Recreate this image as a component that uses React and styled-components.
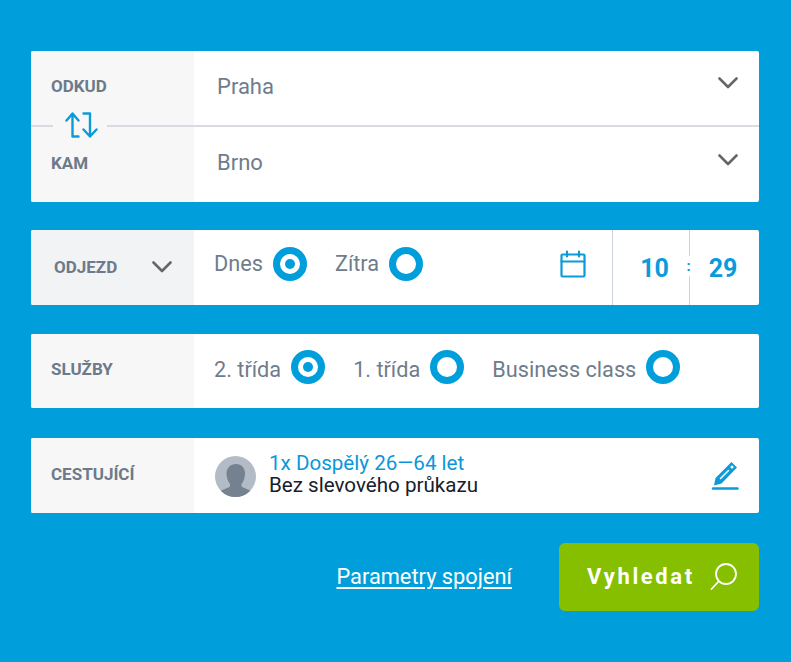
import React from 'react';
import styled, { createGlobalStyle } from 'styled-components';

const Global = createGlobalStyle`
  html, body { margin: 0; padding: 0; background: #009fdc; }
  body { font-family: Roboto, "Liberation Sans", sans-serif; }
`;
const Page = styled.div`
  width: 791px; height: 662px; box-sizing: border-box; padding: 51px 32px 0 31px;
  background: #009fdc; display: flex; flex-direction: column; overflow: hidden;
`;
const Card = styled.section`
  display: grid; grid-template-columns: 163px 1fr; background: #fff; border-radius: 2px; flex: none;
  height: ${p => p.$h}px; margin-top: ${p => p.$mt || 0}px; overflow: hidden; position: relative;
`;
const Label = styled.div`
  background: ${p => p.$bg || '#f7f7f7'}; color: #6c7a8a; font-size: 17px; font-weight: 700;
  display: flex; align-items: center; justify-content: space-between;
  padding: 0 ${p => p.$pr || 0}px ${p => p.$pb || 0}px ${p => p.$pl || 20}px; box-sizing: border-box;
`;
const RouteRows = styled.div` grid-column: 1 / 3; display: flex; flex-direction: column; `;
const RouteRow = styled.div`
  display: grid; grid-template-columns: 163px 1fr; height: 74px; flex: none;
  & + & { height: 77px; border-top: 2px solid #d8dce2; box-sizing: border-box; }
`;
const RouteValue = styled.div`
  display: flex; align-items: center; justify-content: space-between; padding: 0 21px 4px 23px;
  font-size: 22px; color: #6f7c8b;
`;
const ChevronUp = styled.span` margin-top: -6px; display: flex; `;
const Swap = styled.div`
  position: absolute; left: 22px; top: 56px; width: 54px; height: 36px; box-sizing: border-box;
  display: flex; align-items: center; padding-left: 12px; background: #f7f7f7;
`;
const Body = styled.div`
  display: flex; align-items: center; padding: 0 0 ${p => p.$pb || 0}px 20px; min-width: 0;
`;
const Choice = styled.div`
  display: flex; align-items: center; gap: 10px; font-size: 21.7px; color: #6f7c8b;
  margin-right: ${p => p.$mr}px;
`;
const Word = styled.span` padding-top: ${p => p.$pt || 0}px; `;
const Radio = styled.span`
  width: 34px; height: 34px; box-sizing: border-box; border: 7px solid #009fdc; border-radius: 50%;
  display: flex; align-items: center; justify-content: center; background: #fff;
  &::after { content: ''; width: 10px; height: 10px; border-radius: 50%; background: ${p => p.$on ? '#009fdc' : 'transparent'}; }
`;
const DateChoices = styled.div` display: flex; align-items: center; padding-bottom: 8px; `;
const CalendarSlot = styled.div`
  margin-left: auto; width: 52px; height: 100%; display: flex; align-items: center; padding-bottom: 7px; box-sizing: border-box;
`;
const Time = styled.div`
  height: 100%; width: ${p => p.$w}px; border-left: 1.5px solid #ccd2db; box-sizing: border-box;
  display: flex; align-items: center; justify-content: center; color: #0a9bd9; font-size: 25px;
  font-weight: 700; position: relative;
  padding: 2px ${p => p.$pr || 0}px 0 ${p => p.$pl || 0}px;
`;
const Colon = styled.span`
  position: absolute; left: -5px; top: 26px; font-size: 15px; background: #fff; line-height: 20px; width: 7px; text-align: center;
`;
const Avatar = styled.div`
  width: 41px; height: 41px; border-radius: 50%; overflow: hidden; flex: none; background: #b3bcc6; margin: 2px 13px 0 1px;
`;
const Lines = styled.div` display: flex; flex-direction: column; font-size: 20.6px; line-height: 22px; margin-top: -3px; `;
const Blue = styled.span` color: #0a97d9; `;
const Dark = styled.span` color: #16202c; `;
const EditSlot = styled.div` margin-left: auto; margin-right: 20px; display: flex; `;
const Actions = styled.div`
  display: flex; justify-content: flex-end; align-items: center; margin-top: 30px; gap: 47px;
`;
const Link = styled.a`
  color: #fff; font-size: 21.8px; text-decoration: underline; text-underline-offset: 3px; padding-bottom: 2px;
`;
const Search = styled.button`
  width: 200px; height: 68px; border: 0; border-radius: 6px; background: #85bf00; color: #fff;
  font: 700 22px Roboto, sans-serif; letter-spacing: 2.6px; display: flex; align-items: center;
  padding: 0 0 2px 28px; gap: 15px; box-sizing: border-box;
`;
const SearchIcon = styled.svg` margin-top: 2px; `;

const Chevron = ({ color = '#666' }) => (
  <svg width="20" height="12" viewBox="0 0 20 12" fill="none" stroke={color} strokeWidth="2.6" strokeLinecap="round" strokeLinejoin="round"><path d="M1.5 1.5 10 10l8.5-8.5" /></svg>
);

export default function App() {
  return (
    <Page>
      <Global />
      <Card $h={151}>
        <RouteRows>
          <RouteRow>
            <Label $pb={4}>ODKUD</Label>
            <RouteValue>Praha<ChevronUp><Chevron /></ChevronUp></RouteValue>
          </RouteRow>
          <RouteRow>
            <Label $pb={4}>KAM</Label>
            <RouteValue>Brno<ChevronUp><Chevron /></ChevronUp></RouteValue>
          </RouteRow>
        </RouteRows>
        <Swap>
          <svg width="33" height="26" viewBox="0 0 33 26" fill="none" stroke="#0a9bd9" strokeWidth="2.4" strokeLinecap="round" strokeLinejoin="round">
            <path d="M1.500 8.500 7.500 1.500l6 7M7.500 2v22.500h6" />
            <path d="M18.500 1.500H25V24M18.500 17.500l6.500 7 6.500-7" />
          </svg>
        </Swap>
      </Card>
      <Card $h={75} $mt={28}>
        <Label $bg="#f2f3f5" $pl={23} $pr={22} $pb={2}>ODJEZD<Chevron /></Label>
        <Body>
          <DateChoices>
            <Choice $mr={28}>Dnes<Radio $on /></Choice>
            <Choice $mr={0}>Zítra<Radio /></Choice>
          </DateChoices>
          <CalendarSlot>
            <svg width="26" height="28" viewBox="0 0 26 28" fill="none" stroke="#0a9bd9" strokeWidth="2.200" strokeLinejoin="round" strokeLinecap="round">
              <rect x="1.500" y="4.500" width="23" height="22" rx="1" />
              <path d="M1.500 11.500h23M7 1.500v5M19 1.500v5" />
            </svg>
          </CalendarSlot>
          <Time $w={77} $pl={7}>10</Time>
          <Time $w={70} $pr={3}><Colon>:</Colon>29</Time>
        </Body>
      </Card>
      <Card $h={74} $mt={29}>
        <Label $pb={4}>SLUŽBY</Label>
        <Body $pb={8}>
          <Choice $mr={28}><Word $pt={4}>2. třída</Word><Radio $on /></Choice>
          <Choice $mr={28}><Word $pt={4}>1. třída</Word><Radio /></Choice>
          <Choice $mr={0}><Word $pt={4}>Business class</Word><Radio /></Choice>
        </Body>
      </Card>
      <Card $h={75} $mt={30}>
        <Label $pb={4}>CESTUJÍCÍ</Label>
        <Body>
          <Avatar>
            <svg width="41" height="41" viewBox="0 0 41 41">
              <path fill="#74818f" d="M21 8c5.500 0 9 4 9 9.500 0 4.500-1.500 8-3.500 10.500v2.500c2 1.500 8 3 10 5.500v5H5v-5c2-2.500 8-4 10-5.500V28c-2-2.500-3.500-6-3.500-10.500C11.500 12 15.500 8 21 8z" />
            </svg>
          </Avatar>
          <Lines>
            <Blue>1x Dospělý 26—64 let</Blue>
            <Dark>Bez slevového průkazu</Dark>
          </Lines>
          <EditSlot>
            <svg width="28" height="30" viewBox="0 0 28 30">
              <path fill="#0a9bd9" d="M3 24.500 4.500 17 18.500 3 20.500 1 26 6.500 10.500 22.500z" />
              <path stroke="#fff" strokeWidth="1.600" strokeLinecap="round" d="M9.500 17.500 17.500 9.500" />
              <circle cx="21" cy="6" r="1.500" fill="#fff" />
              <path stroke="#0a9bd9" strokeWidth="2.400" strokeLinecap="round" d="M2 27.500h24.500" />
            </svg>
          </EditSlot>
        </Body>
      </Card>
      <Actions>
        <Link>Parametry spojení</Link>
        <Search>Vyhledat
          <SearchIcon width="28" height="28" viewBox="0 0 28 28" fill="none" stroke="#fff" strokeWidth="1.800" strokeLinecap="round"><circle cx="16" cy="11" r="10" /><path d="M8.500 18.500 1.500 26" /></SearchIcon>
        </Search>
      </Actions>
    </Page>
  );
}
